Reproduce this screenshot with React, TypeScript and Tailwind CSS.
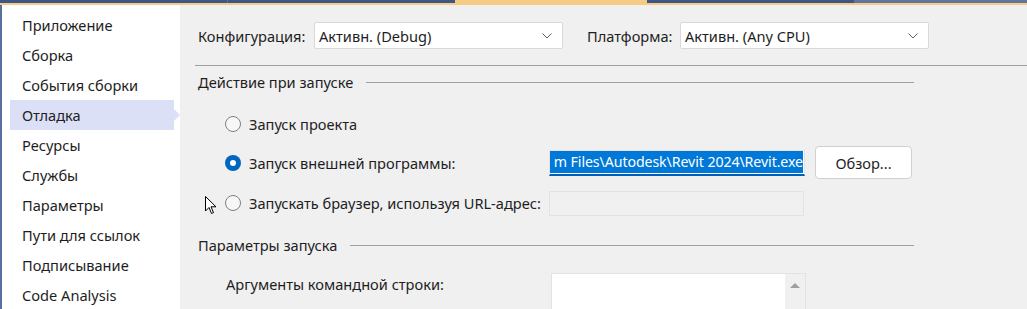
import React from 'react';

const navItems = [
  'Приложение',
  'Сборка',
  'События сборки',
  'Отладка',
  'Ресурсы',
  'Службы',
  'Параметры',
  'Пути для ссылок',
  'Подписывание',
  'Code Analysis',
];

const Chevron = () => (
  <svg width="10" height="6" viewBox="0 0 10 6" className="text-[#606060]">
    <path d="M0.5 0.5 L5 5 L9.5 0.5" fill="none" stroke="currentColor" strokeWidth="1" />
  </svg>
);

const Select: React.FC<{ value: string; className: string }> = ({ value, className }) => (
  <div className={`h-[27px] bg-white border border-[#d9d9d9] rounded-[2px] flex items-center justify-between pl-[4px] pr-[10px] ${className}`}>
    <span>{value}</span>
    <Chevron />
  </div>
);

const Radio: React.FC<{ checked?: boolean; label: string }> = ({ checked, label }) => (
  <div className="flex items-center gap-[8px]">
    {checked ? (
      <span className="w-[16px] h-[16px] rounded-full bg-[#0067c0] flex items-center justify-center">
        <span className="w-[6px] h-[6px] rounded-full bg-white" />
      </span>
    ) : (
      <span className="w-[16px] h-[16px] rounded-full border border-[#808080] bg-[#f7f7f7]" />
    )}
    <span>{label}</span>
  </div>
);

const SectionHeader: React.FC<{ title: string; end: number }> = ({ title, end }) => (
  <div className="h-[22px] flex items-center gap-[13px]" style={{ width: end }}>
    <span className="whitespace-nowrap">{title}</span>
    <div className="flex-1 h-px bg-[#a0a0a0]" />
  </div>
);

export default function App() {
  return (
    <div
      className="w-[1027px] h-[309px] overflow-hidden flex flex-col bg-[#f0f0f0] text-[14.6px] leading-[22px] text-[#1e1e1e]"
      style={{ fontFamily: '"Segoe UI", "Noto Sans", sans-serif' }}
    >
      {/* tab strip */}
      <div className="h-[3px] flex shrink-0">
        <div className="w-[227px] bg-[#3f5587]" />
        <div className="w-px bg-[#5b6ea0]" />
        <div className="w-[227px] bg-[#3f5587]" />
        <div className="w-[192px] bg-[#f5cc84]" />
        <div className="w-[207px] bg-[#3f5587]" />
        <div className="flex-1 bg-[#65739f]" />
      </div>
      <div className="h-[2px] bg-[#f5cc84] shrink-0" />

      <div className="flex flex-1 min-h-0">
        {/* sidebar */}
        <div className="w-[180px] shrink-0 bg-white border-l-2 border-[#5b6ea0] pt-[5px]">
          {navItems.map((item) => {
            const active = item === 'Отладка';
            return (
              <div key={item} className="relative h-[30px] flex items-center">
                {active && (
                  <div className="absolute left-[8px] right-[6px] top-0 bottom-0 bg-[#dce0f7]">
                    <div className="absolute right-[-6px] top-[9px] w-0 h-0 border-y-[6px] border-y-transparent border-l-[6px] border-l-[#dce0f7]" />
                  </div>
                )}
                <span className="relative pl-[20px]">{item}</span>
              </div>
            );
          })}
        </div>

        {/* main */}
        <div className="flex-1 relative pl-[18px] pt-[17px]">
          <div className="flex items-center">
            <span className="w-[116px]">Конфигурация:</span>
            <Select value="Активн. (Debug)" className="w-[249px]" />
            <span className="ml-[24px] w-[93px]">Платформа:</span>
            <Select value="Активн. (Any CPU)" className="w-[249px]" />
          </div>

          <div className="h-px bg-[#a0a0a0] mt-[16px] -ml-[3px]" />

          <div className="mt-[5px]">
            <SectionHeader title="Действие при запуске" end={716} />
          </div>

          <div className="pl-[27px] flex flex-col">
            <div className="h-[24px] mt-[19px] flex items-center">
              <Radio label="Запуск проекта" />
            </div>
            <div className="h-[33px] mt-[10px] flex items-center">
              <div className="w-[324px]">
                <Radio checked label="Запуск внешней программы:" />
              </div>
              <div className="w-[256px] h-[26px] bg-white border border-[#e3e3e3] border-b-2 border-b-[#005fb8] overflow-hidden flex items-center justify-end pr-[1px]">
                <span className="bg-[#0078d7] text-white h-[22px] leading-[22px] w-[253px] flex justify-end overflow-hidden">
                  <span className="whitespace-nowrap text-[14.2px] tracking-[-0.1px]">m Files\Autodesk\Revit 2024\Revit.exe</span>
                </span>
              </div>
              <button className="ml-[10px] w-[97px] h-[33px] bg-white border border-[#d0d0d0] rounded-[4px] text-[#1e1e1e]">
                Обзор...
              </button>
            </div>
            <div className="h-[26px] mt-[11px] flex items-center">
              <div className="w-[324px]">
                <Radio label="Запускать браузер, используя URL-адрес:" />
              </div>
              <div className="w-[255px] h-[25px] border border-[#e3e3e3] bg-[#f0f0f0]" />
            </div>
          </div>

          <div className="mt-[18px]">
            <SectionHeader title="Параметры запуска" end={716} />
          </div>

          <div className="pl-[28px] mt-[17px] flex items-start">
            <span className="w-[325px]">Аргументы командной строки:</span>
            <div className="w-[255px] h-[60px] bg-white border border-[#e3e3e3] flex justify-end">
              <div className="w-[20px] bg-[#f0f0f0] flex justify-center pt-[9px]">
                <div className="w-0 h-0 border-x-[5px] border-x-transparent border-b-[5px] border-b-[#a0a0a0]" />
              </div>
            </div>
          </div>

          {/* mouse pointer */}
          <svg className="absolute left-[25px] top-[191px]" width="13" height="19" viewBox="0 0 13 19">
            <path d="M0.5 0.5 L0.5 15 L4 11.5 L6.5 17.5 L8.5 16.6 L6 10.8 L11 10.8 Z" fill="white" stroke="black" strokeWidth="1" strokeLinejoin="round" />
          </svg>
        </div>
      </div>
    </div>
  );
}
